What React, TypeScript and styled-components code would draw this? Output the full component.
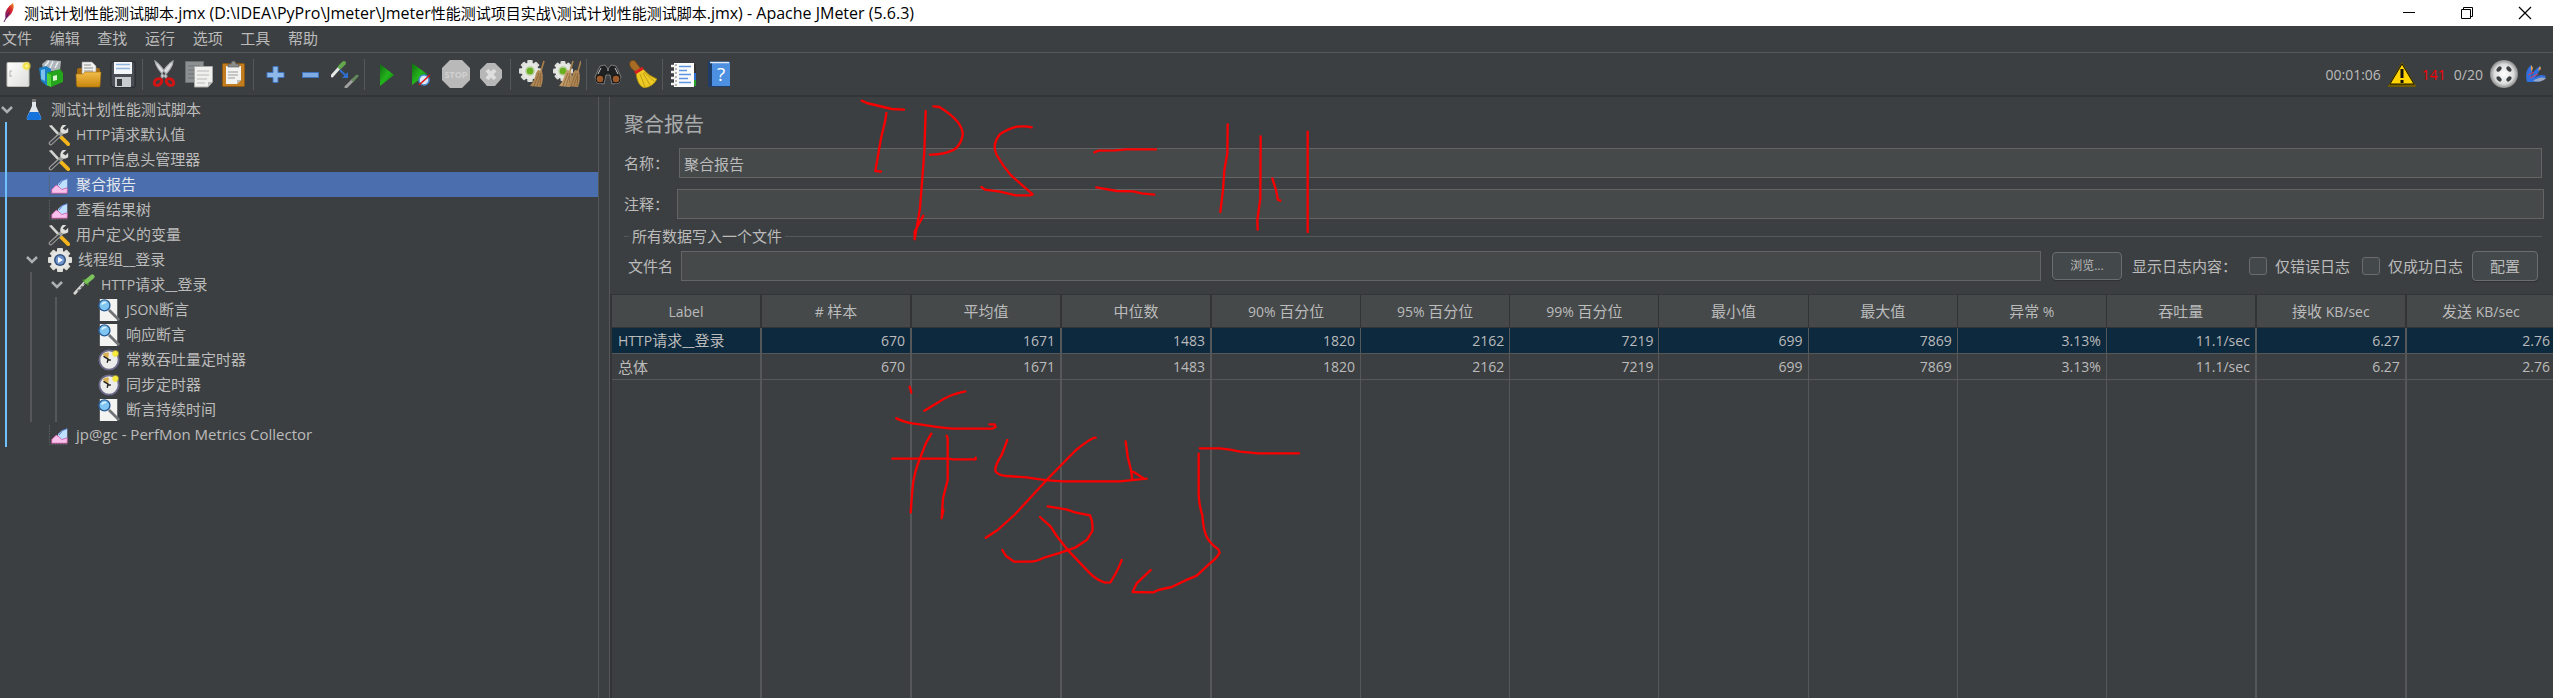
import React from "react";
import styled, { createGlobalStyle, css } from "styled-components";

const latinFont = `"Open Sans", "Noto Sans", "Noto Sans CJK SC", sans-serif`;

const color = {
  bg: "#3c3f41",
  field: "#45494a",
  text: "#bbbbbb",
  line: "#555759",
  fieldLine: "#646464",
  dark: "#323436",
  tree: "#4b6eaf",
  row: "#0d293e",
  active: "#6fc0ff",
};

const GlobalStyle = createGlobalStyle`
  *, *::before, *::after { box-sizing: border-box; }
  body {
    margin: 0;
    background: ${color.bg};
    color: ${color.text};
    font: 15px/25px ${latinFont};
  }
  button, input { font: inherit; color: inherit; }
`;

const Window = styled.div`
  position: relative;
  display: flex;
  flex-direction: column;
  height: 100vh;
  min-height: 460px;
  overflow: hidden;
`;

const Latin = styled.span<{ $size: number }>`
  font-size: ${(p) => p.$size}px;
`;

const Mixed = ({ text, size = 14 }: { text: string; size?: number }) => (
  <>
    {text.split(/([\x20-\x7e]+)/).map((part, i) =>
      i % 2 ? <Latin key={i} $size={size}>{part}</Latin> : part
    )}
  </>
);

/* ---------- title bar ---------- */

const TitleBar = styled.header`
  display: flex;
  align-items: center;
  height: 26px;
  flex: none;
  padding: 0 13px 0 2px;
  background: #fff;
  color: #000;
`;

const Title = styled.h1`
  flex: 1;
  margin: 0 0 0 8px;
  font-size: 15px;
  font-weight: 400;
  line-height: 24px;
  white-space: pre;
`;

const WindowButtons = styled.div`
  display: flex;
`;

const WindowButton = styled.button`
  display: grid;
  place-items: center;
  width: 58px;
  height: 22px;
  padding: 0;
  border: 0;
  background: none;
  &:last-child { width: 30px; margin-left: 14px; }
`;

/* ---------- menu ---------- */

const MenuBar = styled.nav`
  flex: none;
  height: 27px;
  border-bottom: 1px solid ${color.line};
`;

const MenuList = styled.div`
  display: flex;
  justify-content: space-between;
  width: 318px;
  padding-left: 2px;
`;

const MenuItem = styled.button`
  padding: 0;
  border: 0;
  background: none;
  line-height: 24px;
`;

/* ---------- tool bar ---------- */

const ToolBar = styled.div`
  display: flex;
  align-items: center;
  flex: none;
  height: 44px;
  border-bottom: 2px solid ${color.dark};
`;

const ToolButton = styled.button`
  display: grid;
  place-items: center;
  width: 35px;
  height: 32px;
  padding: 0;
  border: 0;
  background: none;
`;

const Divider = styled.i`
  width: 1px;
  height: 31px;
  margin: 0 3px 0 2px;
  background: ${color.line};
`;

const Status = styled.div`
  display: flex;
  align-items: center;
  gap: 7px;
  margin-left: auto;
  padding-right: 6px;
  font-size: 14px;
`;

const Errors = styled.span`
  color: #f80000;
  margin: 0 1px 0 -1px;
`;

/* ---------- body ---------- */

const Body = styled.div`
  display: flex;
  flex: 1;
  min-height: 0;
`;

const TreePane = styled.aside`
  flex: none;
  width: 599px;
  border-right: 1px solid ${color.line};
`;

const TreeList = styled.ul`
  list-style: none;
  margin: 0;
  padding: 0;
`;

const Branch = styled(TreeList)<{ $active?: boolean; $indent: number }>`
  background: linear-gradient(
      ${(p) => (p.$active ? color.active : color.line)},
      ${(p) => (p.$active ? color.active : color.line)}
    )
    ${(p) => p.$indent}px 0 / 2px 100% no-repeat;
`;

const TreeRow = styled.div<{ $depth: number; $selected?: boolean }>`
  display: flex;
  align-items: center;
  height: 25px;
  padding-left: ${(p) => p.$depth * 25}px;
  white-space: pre;
  ${(p) =>
    p.$selected &&
    css`
      color: #e4e8ee;
      background: linear-gradient(${color.active}, ${color.active}) 5px 0 / 2px 100% no-repeat, ${color.tree};
    `}
`;

const Toggle = styled.span`
  display: grid;
  width: 14px;
  margin-right: 9px;
`;

const TreeText = styled.span`
  margin-left: 6px;
`;

const Main = styled.main`
  display: flex;
  flex-direction: column;
  flex: 1;
  min-width: 0;
  margin-left: 10px;
  border-left: 1px solid ${color.line};
  overflow: hidden;
`;

const Heading = styled.h2`
  margin: 14px 0 10px 14px;
  font-size: 20px;
  font-weight: 400;
  line-height: 27px;
  color: #a9abac;
`;

const Field = styled.label<{ $wide?: boolean }>`
  display: flex;
  align-items: center;
  gap: ${(p) => (p.$wide ? 8 : 10)}px;
  height: 30px;
  margin: 0 ${(p) => (p.$wide ? 9 : 11)}px 11px 14px;
  white-space: nowrap;
`;

const TextBox = styled.input`
  flex: 1;
  min-width: 0;
  height: 30px;
  padding: 0 4px;
  border: 1px solid ${color.fieldLine};
  background: ${color.field};
  outline: 0;
`;

const FileGroup = styled.fieldset`
  min-width: 0;
  margin: -6px 11px 13px 14px;
  padding: 0 4px;
  border: 0;
  border-top: 1px solid ${color.line};
`;

const Legend = styled.legend`
  margin-left: 1px;
  padding: 0 3px;
  line-height: 25px;
`;

const FileRow = styled.div`
  display: flex;
  align-items: center;
  height: 30px;
  margin-top: 2px;
  white-space: nowrap;
`;

const FileName = styled.label`
  display: flex;
  align-items: center;
  flex: 1;
  gap: 8px;
`;

const PushButton = styled.button<{ $small?: boolean }>`
  width: ${(p) => (p.$small ? 70 : 66)}px;
  height: ${(p) => (p.$small ? 28 : 30)}px;
  margin-left: ${(p) => (p.$small ? 11 : 9)}px;
  padding: 0;
  border: 1px solid #6b6e70;
  border-radius: 4px;
  background: #43484a;
  box-shadow: 0 1px 1px #2f3133;
  font-size: ${(p) => (p.$small ? 12 : 15)}px;
  line-height: 20px;
`;

const LogCaption = styled.span`
  margin-left: 10px;
`;

const Check = styled.label`
  display: flex;
  align-items: center;
  gap: 8px;
  margin-left: 12px;
  input {
    appearance: none;
    width: 18px;
    height: 18px;
    margin: 0;
    border: 1px solid #6b6b6b;
    border-radius: 3px;
    background: #43494a;
  }
`;

const TableArea = styled.div`
  flex: 1;
  min-height: 0;
  border: 0 solid ${color.dark};
  border-width: 1px 0 0 2px;
`;

const Table = styled.table`
  width: calc(100% + 3px);
  height: 100%;
  table-layout: fixed;
  border-collapse: separate;
  border-spacing: 0;
`;

const Head = styled.th<{ $thick?: boolean }>`
  width: ${(p) => (p.$thick ? "150px" : "auto")};
  height: 33px;
  padding: 0;
  border: 0 solid ${color.dark};
  border-width: 0 ${(p) => (p.$thick ? 2 : 1)}px 1px 0;
  background: #45494a;
  font-weight: 400;
`;

const Cell = styled.td<{ $thick?: boolean; $selected?: boolean; $text?: boolean }>`
  height: 25px;
  padding: 0 5px 0 6px;
  border: 0 solid ${color.line};
  border-width: 0 ${(p) => (p.$thick ? 2 : 1)}px 1px 0;
  background: ${(p) => (p.$selected ? color.row : "transparent")};
  line-height: 24px;
  text-align: ${(p) => (p.$text ? "left" : "right")};
  white-space: nowrap;
`;

const EmptyCell = styled.td<{ $thick?: boolean }>`
  padding: 0;
  border-right: ${(p) => (p.$thick ? 2 : 1)}px solid ${color.line};
`;

const Ink = styled.svg`
  position: absolute;
  left: 0;
  top: 0;
  pointer-events: none;
`;

/* ---------- icons ---------- */

const Glyph = ({ size = 28, box = size, children }: { size?: number; box?: number; children: React.ReactNode }) => (
  <svg width={size} height={size} viewBox={`0 0 ${box} ${box}`} aria-hidden="true">
    {children}
  </svg>
);

const HiddenDefs = styled.svg`
  position: absolute;
`;

const Defs = () => (
  <HiddenDefs width="0" height="0" aria-hidden="true">
    <defs>
      <linearGradient id="paper" x1="0" y1="0" x2="1" y2="1">
        <stop offset="0" stopColor="#ffffff" />
        <stop offset="1" stopColor="#dcdcda" />
      </linearGradient>
      <linearGradient id="gold" x1="0" y1="0" x2="0" y2="1">
        <stop offset="0" stopColor="#f2bd4a" />
        <stop offset="1" stopColor="#c8860c" />
      </linearGradient>
      <linearGradient id="green" x1="0" y1="0" x2="1" y2="1">
        <stop offset="0" stopColor="#0f6a10" />
        <stop offset=".5" stopColor="#23b41c" />
        <stop offset="1" stopColor="#0b7a0c" />
      </linearGradient>
      <linearGradient id="feather" x1="1" y1="0" x2="0" y2="1">
        <stop offset="0" stopColor="#f69923" />
        <stop offset=".4" stopColor="#d2202f" />
        <stop offset="1" stopColor="#6d1f7c" />
      </linearGradient>
      <radialGradient id="glow">
        <stop offset="0" stopColor="#ffffb0" />
        <stop offset=".5" stopColor="#f2e03c" />
        <stop offset="1" stopColor="#f2e03c" stopOpacity="0" />
      </radialGradient>
      <radialGradient id="disc">
        <stop offset="0" stopColor="#ffffff" />
        <stop offset=".7" stopColor="#dcdcdc" />
        <stop offset="1" stopColor="#8c8c8c" />
      </radialGradient>
    </defs>
  </HiddenDefs>
);

const Cog = ({ cx, cy, r, children }: { cx: number; cy: number; r: number; children?: React.ReactNode }) => (
  <g transform={`translate(${cx} ${cy})`}>
    {[0, 45, 90, 135].map((a) => (
      <rect key={a} x={-r * 0.25} y={-r} width={r * 0.5} height={r * 2} rx="1" fill="#dededb" transform={`rotate(${a})`} />
    ))}
    <circle r={r * 0.78} fill="#e6e6e3" />
    {children}
  </g>
);

const Bristles = ({ x, light }: { x: number; light?: boolean }) => (
  <g transform={`translate(${x} 0)`}>
    <path d="M25 1 L22 11" stroke="#a8804c" strokeWidth="1.6" fill="none" />
    <path d="M19 10 L23 11 Q25 19 22 27 L11 26 Q16 20 17 13Z" fill={light ? "#c39b68" : "#b08855"} />
    <path d="M20 13 L15 26 M22 13 L18 26 M22 16 L21 26" stroke="#7c5a30" strokeWidth=".7" fill="none" />
  </g>
);

const NewIcon = () => (
  <Glyph>
    <rect x="3" y="2.5" width="22" height="24" rx="1" fill="url(#paper)" stroke="#bdbdb8" />
    <path d="M6 11 h2 M6 16 h2 M6 11 v6" stroke="#b5b5b5" fill="none" />
    <circle cx="22.5" cy="6" r="5" fill="url(#glow)" />
  </Glyph>
);
const TemplatesIcon = () => (
  <Glyph>
    <path d="M3 4 L8 0 L22 1 L21 10 L5 12Z" fill="#aeb5ba" />
    <path d="M6 6 L10 1 M11 8 L14 1 M16 8 L19 2" stroke="#e8ecee" strokeWidth="1.5" />
    <path d="M0 8 L7 6 L12 9 L12 25 L8 26 L2 21Z" fill="#1c7fc4" />
    <path d="M2 10 L6 9 V21 L2 19Z" fill="#7cc0ee" />
    <path d="M8 13 L21 9 L24 13 V22 L12 27 L8 25Z" fill="#25a51c" />
    <path d="M8 13 L12 15 V27 L8 25Z" fill="#4fd13a" />
    <path d="M14 16 L18 15 V20 L14 21Z" fill="#d8f5cd" />
  </Glyph>
);
const OpenIcon = () => (
  <Glyph>
    <path d="M3 10 Q3 8 5 8 H24 Q26 8 26 10 V20 H3Z" fill="#a46a10" />
    <path d="M8 2 H18 L22 6 V16 H8Z" fill="#f1f1ef" stroke="#999" strokeWidth=".6" />
    <path d="M10 5 h7 M10 8 h9 M10 11 h9" stroke="#8e8e8e" />
    <path d="M2 14 H9 L11 12 H27 L26 26 Q26 27 25 27 H4 Q2.5 27 2.5 25Z" fill="url(#gold)" stroke="#a56d0a" strokeWidth=".6" />
  </Glyph>
);
const SaveIcon = () => (
  <Glyph>
    <path d="M2 3 Q2 2 3 2 H25 Q26 2 26 3 V26 Q26 27 25 27 H4 L2 25Z" fill="#4a4f56" stroke="#25282c" />
    <rect x="5" y="2" width="18" height="12" fill="#f4f7fa" />
    <path d="M7 4.5 h14 M7 8.5 h14" stroke="#8fb4dd" strokeWidth="1.5" />
    <rect x="6" y="17" width="16" height="10" fill="#c9ccce" />
    <rect x="8" y="19" width="5" height="7" fill="#3a3d40" />
  </Glyph>
);
const CutIcon = () => (
  <Glyph>
    <path d="M5 1 Q6 8 16 18 L17 16 Q12 6 5 1Z M23 1 Q23 8 12 18 L11 16 Q15 6 23 1Z" fill="#dcdedf" stroke="#a8abad" strokeWidth="1.2" />
    <ellipse cx="8" cy="22" rx="4" ry="3" transform="rotate(-35 8 22)" fill="none" stroke="#d01414" strokeWidth="3" />
    <ellipse cx="20" cy="22" rx="4" ry="3" transform="rotate(35 20 22)" fill="none" stroke="#d01414" strokeWidth="3" />
  </Glyph>
);
const CopyIcon = () => (
  <Glyph>
    <rect x=".5" y="1.5" width="18" height="21" fill="#8d9090" stroke="#6b6e6e" />
    <path d="M3 6 h12 M3 10 h6 M3 14 h6 M3 18 h6" stroke="#6d7070" />
    <path d="M9.5 6.5 H27.5 V22 L23 27 H9.5Z" fill="#f0f0ee" stroke="#aaa" />
    <path d="M12 11 h12 M12 15 h12 M12 19 h10 M12 23 h8" stroke="#b9b9b7" />
    <path d="M27 22 H23 V27Z" fill="#bdbdbb" />
  </Glyph>
);
const PasteIcon = () => (
  <Glyph>
    <rect x="2.5" y="3.5" width="22" height="23" rx="1" fill="#c17d1f" stroke="#8b5712" />
    <path d="M6 6 H21 V20 L17 24 H6Z" fill="#f2f2f0" />
    <path d="M8 12 h10 M8 15 h10 M8 18 h7" stroke="#9b9b9b" />
    <path d="M21 20 H17 V24Z" fill="#bbb" />
    <path d="M8 7 V4 H11 Q11 1 13.5 1 Q16 1 16 4 H19 V7Z" fill="#8a8c8a" stroke="#555" strokeWidth=".6" />
  </Glyph>
);
const PlusIcon = () => (
  <Glyph>
    <path d="M12 6.5 h5 v6 h6 v5 h-6 v5 h-5 v-5 h-6 v-5 h6Z" fill="#8fb8ea" stroke="#3f74bd" />
  </Glyph>
);
const MinusIcon = () => (
  <Glyph>
    <rect x="6.5" y="12.5" width="16" height="5" fill="#7fabe2" stroke="#3f74bd" />
  </Glyph>
);
const ToggleIcon = () => (
  <Glyph>
    <path d="M1 16 L9 7" stroke="#e6e8e6" strokeWidth="3" strokeLinecap="round" />
    <path d="M9 7 L13 3" stroke="#63a84a" strokeWidth="4" strokeLinecap="round" />
    <path d="M9 10 L15 16" stroke="#2f6fd0" strokeWidth="2" />
    <path d="M17 12 V18 H11Z" fill="#2f6fd0" />
    <g opacity=".7">
      <path d="M15 27 L22 20" stroke="#c9cbc9" strokeWidth="3" strokeLinecap="round" />
      <path d="M22 20 L26 16" stroke="#74a866" strokeWidth="3" strokeLinecap="round" />
    </g>
  </Glyph>
);
const PlayIcon = () => (
  <Glyph>
    <path d="M8 4 L22 15 L8 26Z" fill="url(#green)" />
  </Glyph>
);
const PlayNowIcon = () => (
  <Glyph>
    <path d="M5 3 L20 14 L5 25Z" fill="url(#green)" />
    <circle cx="17" cy="20" r="5" fill="#dbe9f7" stroke="#4a8ad0" strokeWidth="1.5" />
    <path d="M12 25 L23 15" stroke="#d11" strokeWidth="1.5" />
  </Glyph>
);
const StopIcon = () => (
  <Glyph>
    <path d="M8 0 H20 L28 8 V20 L20 28 H8 L0 20 V8Z" fill="#b9b9b9" />
    <text x="14" y="18" textAnchor="middle" fontSize="9" fontWeight="700" fill="#d0d0d0">STOP</text>
  </Glyph>
);
const ShutdownIcon = () => (
  <Glyph>
    <path d="M10 3 H18 L25 10 V18 L18 26 H10 L3 18 V10Z" fill="#b7b7b7" />
    <path d="M10 10 L18 19 M18 10 L10 19" stroke="#dedede" strokeWidth="4" />
  </Glyph>
);
const ClearIcon = () => (
  <Glyph>
    <Cog cx={12} cy={11} r={11}>
      <circle r="4" fill="#69b022" stroke="#b7cf97" strokeWidth="1.5" />
    </Cog>
    <Bristles x={1} />
  </Glyph>
);
const ClearAllIcon = () => (
  <Glyph>
    <Cog cx={10} cy={11} r={10}>
      <circle r="4" fill="#69b022" stroke="#b7cf97" strokeWidth="1.5" />
    </Cog>
    <Bristles x={-5} light />
    <Bristles x={3} />
  </Glyph>
);
const SearchIcon = () => (
  <Glyph>
    <path d="M6 6 L11 5 L14 9 L17 5 L22 6 L27 17 L25 23 L18 24 L16 15 H12 L10 24 L3 23 L1 17Z" fill="#1f2022" stroke="#8b8b8b" strokeWidth=".8" />
    <circle cx="6" cy="19" r="4" fill="#9a5a2c" stroke="#111" />
    <circle cx="22" cy="19" r="4" fill="#9a5a2c" stroke="#111" />
    <path d="M7 8 L4 14 M21 8 L24 14 M13 10 h2" stroke="#c9c9c9" />
  </Glyph>
);
const BroomIcon = () => (
  <Glyph>
    <path d="M1 2 Q3 -1 6 1 L12 9 L7 12 Q-1 7 1 2Z" fill="#a86d24" stroke="#6d4212" strokeWidth=".7" />
    <path d="M7 13 L14 9 Q20 16 28 19 Q24 27 15 28 Q8 25 7 13Z" fill="#ecc924" stroke="#a68505" strokeWidth=".7" />
    <path d="M11 14 L16 27 M14 13 L21 25 M15 12 L25 21" stroke="#b39210" strokeWidth=".8" />
    <path d="M6 13 L14 8" stroke="#d81f1f" strokeWidth="3" />
  </Glyph>
);
const LogIcon = () => (
  <Glyph>
    <path d="M24 4 h2 v22 h-4Z" fill="#24a02c" />
    <path d="M24 4 h2 v9 h-2Z" fill="#333" />
    <path d="M24 13 h2 v7 h-2Z" fill="#2d6bcf" />
    <rect x="4" y="3" width="20" height="24" fill="#fbfbfb" />
    <path d="M1 6 h5 M1 12 h5 M1 18 h5 M1 24 h5" stroke="#f0f0f0" strokeWidth="2.5" />
    <path d="M6 4 V26" stroke="#777" strokeDasharray="2 2" />
    <path d="M9 6.5 h12 M9 10.5 h8 M9 14.5 h12 M9 18.5 h9 M9 22.5 h12" stroke="#5d95e0" strokeWidth="1.3" />
  </Glyph>
);
const HelpIcon = () => (
  <Glyph>
    <rect x="3" y="1" width="22" height="26" rx="1" fill="#1e3d68" />
    <rect x="7" y="2" width="18" height="24" fill="#4d8fe0" />
    <path d="M5 2.5 H24" stroke="#dfe8f2" strokeWidth="1.5" />
    <text x="16" y="21" textAnchor="middle" fontSize="19" fill="#fff">?</text>
  </Glyph>
);
const WarningIcon = () => (
  <Glyph>
    <path d="M14 2 L28 26 V27 H0 V26Z" fill="#6d5a00" />
    <path d="M14 4 L26 24 H2Z" fill="#ffd400" stroke="#1a1800" />
    <path d="M14 9 V18 M14 20 V23" stroke="#111" strokeWidth="3" />
  </Glyph>
);
const ThreadsIcon = () => (
  <Glyph>
    <circle cx="14" cy="14" r="14" fill="url(#disc)" />
    {[45, 135, 225, 315].map((a) => (
      <ellipse key={a} cx="14" cy="7" rx="3" ry="2" fill="#3d4042" transform={`rotate(${a} 14 14)`} />
    ))}
  </Glyph>
);
const BirdIcon = () => (
  <Glyph size={22}>
    <path d="M2 19 Q-1 8 6 2 Q9 4 6 15 Q9 6 15 3 Q17 5 10 15 Q14 10 21 13 Q19 19 8 19Z" fill="#2f6fe0" />
    <path d="M6 2 L8 5 L6 9Z M15 3 L16 6 L13 8Z" fill="#f6a43a" />
    <path d="M3 12 L9 9 M5 15 L13 11" stroke="#e0405a" />
    <path d="M8 18 Q14 13 21 15 Q18 20 8 18Z" fill="#9aa7c4" />
  </Glyph>
);
const AppIcon = () => (
  <svg width="14" height="22" viewBox="0 0 14 22" aria-hidden="true">
    <path d="M11 1 Q13 6 9 12 L4 17 Q2 12 5 7 Q8 3 11 1Z" fill="url(#feather)" />
    <path d="M7 10 L2 20" stroke="#5a1a5e" strokeWidth="1" />
  </svg>
);

const FlaskIcon = () => (
  <Glyph size={22}>
    <path d="M9 1 h4 v6 l5 11 q1 3 -2 3 h-10 q-3 0 -2 -3 l5 -11Z" fill="#dfe6ec" />
    <path d="M6.5 13 h9 l2.5 5 q1 3 -2 3 h-10 q-3 0 -2 -3Z" fill="#1474dc" />
    <path d="M9 0 h4 v3 h-4Z" fill="#777" />
  </Glyph>
);
const ToolsIcon = () => (
  <Glyph size={22} box={24}>
    <path d="M1 2 L4 1 L14 12 L12 14Z" fill="#d5d5d3" />
    <path d="M14 14 L22 22" stroke="#f4b51b" strokeWidth="4" strokeLinecap="round" />
    <path d="M3 21 L17 8" stroke="#9a9c9a" strokeWidth="4.500" strokeLinecap="round" />
    <path d="M3 21 L12 13" stroke="#3d4042" strokeWidth="2" strokeLinecap="round" />
    <path d="M16 1 Q12 5 14 9 Q18 12 22 9 V4 L19 7 L16 5 L20 1Z" fill="#dededc" />
  </Glyph>
);
const ChartIcon = () => (
  <Glyph size={22} box={24}>
    <path d="M1.5 1 V22.500 H22" stroke="#5c6062" fill="none" strokeDasharray="2 1" />
    <path d="M11 18 V11 L15 7 L21 5 V19Z" fill="#bfe0ff" />
    <path d="M12 12 L16 7 L21 5" stroke="#3f6dc8" fill="none" />
    <path d="M4 21 V17 L9 12 L12 14 L15 17 L21 15 V21Z" fill="#f8c0ea" stroke="#c24b9c" strokeWidth=".8" />
  </Glyph>
);
const ThreadGroupIcon = () => (
  <Glyph size={24}>
    <Cog cx={12} cy={12} r={12}>
      <circle r="6" fill="#34517e" />
      <circle r="4.5" fill="#6d94cc" />
      <path d="M-2 -3 L3 0 L-2 3Z" fill="#fff" />
    </Cog>
  </Glyph>
);
const PipetteIcon = () => (
  <Glyph size={22} box={24}>
    <path d="M2 21 L13 9" stroke="#d3d6d3" strokeWidth="3" strokeLinecap="round" />
    <path d="M5 19 L13 10" stroke="#4b4e4c" strokeWidth="1.2" strokeDasharray="3 2" />
    <path d="M11 6 L17 12" stroke="#3c8a28" strokeWidth="2.5" />
    <path d="M15 8 L21 3" stroke="#7cc35c" strokeWidth="5" strokeLinecap="round" />
  </Glyph>
);
const AssertionIcon = () => (
  <Glyph size={22} box={24}>
    <rect x="2" y="0" width="19" height="24" fill="#f3f3f2" />
    <path d="M12 12 L23 23" stroke="#6f7375" strokeWidth="3" />
    <circle cx="7" cy="7" r="6" fill="#7fc6f2" stroke="#2a5c94" strokeWidth="1.5" />
    <path d="M4 6 Q6 3 9 4" stroke="#e2f4ff" strokeWidth="1.5" fill="none" />
  </Glyph>
);
const TimerIcon = () => (
  <Glyph size={22} box={24}>
    <circle cx="12" cy="12" r="10.5" fill="#ececea" stroke="#6d6b8c" strokeWidth="2" />
    <path d="M11 12 L5 6 Q8 3 12 4Z" fill="#d9b154" />
    <path d="M6 8 L11 11 L10 15 M11 12 h3" stroke="#222" strokeWidth="1.5" fill="none" />
    <circle cx="19" cy="5" r="4.5" fill="url(#glow)" />
    <circle cx="19" cy="5" r="2.5" fill="#f6ec3a" />
  </Glyph>
);

/* ---------- data ---------- */

type Node = {
  label: string;
  icon: React.ComponentType;
  selected?: boolean;
  children?: Node[];
};

const plan: Node = {
  label: "测试计划性能测试脚本",
  icon: FlaskIcon,
  children: [
    { label: "HTTP请求默认值", icon: ToolsIcon },
    { label: "HTTP信息头管理器", icon: ToolsIcon },
    { label: "聚合报告", icon: ChartIcon, selected: true },
    { label: "查看结果树", icon: ChartIcon },
    { label: "用户定义的变量", icon: ToolsIcon },
    {
      label: "线程组__登录",
      icon: ThreadGroupIcon,
      children: [
        {
          label: "HTTP请求__登录",
          icon: PipetteIcon,
          children: [
            { label: "JSON断言", icon: AssertionIcon },
            { label: "响应断言", icon: AssertionIcon },
            { label: "常数吞吐量定时器", icon: TimerIcon },
            { label: "同步定时器", icon: TimerIcon },
            { label: "断言持续时间", icon: AssertionIcon },
          ],
        },
      ],
    },
    { label: "jp@gc - PerfMon Metrics Collector", icon: ChartIcon },
  ],
};

const menus = ["文件", "编辑", "查找", "运行", "选项", "工具", "帮助"];

const tools: [string, React.ComponentType][][] = [
  [["新建", NewIcon], ["模板", TemplatesIcon], ["打开", OpenIcon], ["保存", SaveIcon]],
  [["剪切", CutIcon], ["复制", CopyIcon], ["粘贴", PasteIcon]],
  [["展开", PlusIcon], ["折叠", MinusIcon], ["切换", ToggleIcon]],
  [["启动", PlayIcon], ["不停顿开始", PlayNowIcon], ["停止", StopIcon], ["关闭", ShutdownIcon]],
  [["清除", ClearIcon], ["清除全部", ClearAllIcon]],
  [["查找", SearchIcon], ["重置搜索", BroomIcon]],
  [["函数助手", LogIcon], ["帮助", HelpIcon]],
];

const columns: { name: string; thick?: boolean }[] = [
  { name: "Label", thick: true },
  { name: "# 样本", thick: true },
  { name: "平均值", thick: true },
  { name: "中位数", thick: true },
  { name: "90% 百分位" },
  { name: "95% 百分位" },
  { name: "99% 百分位" },
  { name: "最小值" },
  { name: "最大值" },
  { name: "异常 %" },
  { name: "吞吐量", thick: true },
  { name: "接收 KB/sec", thick: true },
  { name: "发送 KB/sec" },
];

const figures = ["670", "1671", "1483", "1820", "2162", "7219", "699", "7869", "3.13%", "11.1/sec", "6.27", "2.76"];
const rows = [
  ["HTTP请求__登录", ...figures],
  ["总体", ...figures],
];

const TreeItem = ({ node, depth }: { node: Node; depth: number }) => {
  const Icon = node.icon;
  const latinOnly = /^[\x20-\x7e]+$/.test(node.label);
  return (
    <li>
      <TreeRow $depth={depth} $selected={node.selected}>
        <Toggle>
          {node.children && (
            <svg width="14" height="12" viewBox="0 0 14 12" aria-hidden="true">
              <path d="M2 3 L7 8 L12 3" fill="none" stroke="#adb0b2" strokeWidth="2.5" />
            </svg>
          )}
        </Toggle>
        <Icon />
        <TreeText>
          <Mixed text={node.label} size={latinOnly ? 15 : 14} />
        </TreeText>
      </TreeRow>
      {node.children && (
        <Branch $active={depth === 0} $indent={5 + depth * 25}>
          {node.children.map((child) => (
            <TreeItem key={child.label} node={child} depth={depth + 1} />
          ))}
        </Branch>
      )}
    </li>
  );
};

const Handwriting = () => (
  <Ink width="1400" height="640" viewBox="0 0 1400 640" aria-hidden="true">
    <g fill="none" stroke="#f80000" strokeWidth="7" strokeLinecap="round" strokeLinejoin="round">
      <g transform="translate(590 95) scale(.33333)">
        <path d="M815 17 L830 24 L905 42 L942 44 M889 54 L886 76 L873 130 L856 228 L873 230" />
        <path d="M1007 48 L1003 170 L990 340 L974 433 V410 L1000 362 M1030 34 L1048 36 Q1120 80 1118 120 Q1113 150 1092 164 Q1060 180 1020 179" />
        <path d="M1325 97 Q1310 92 1280 95 Q1245 105 1228 120 Q1205 150 1220 180 Q1240 215 1262 240 L1328 298 L1320 301 H1278 L1230 290 L1185 284 L1174 276" />
      </g>
      <g transform="translate(1020 90) scale(.33333)">
        <path d="M223 187 L235 182 L285 181 L320 178 H408 M229 292 L290 303 L340 304 L365 310 L403 314" />
        <path d="M623 103 L622 190 L613 240 L609 300 L601 366" />
        <path d="M722 139 L721 325 L712 390 L713 419 M757 265 L768 300 L774 330 L781 332 M863 125 V426" />
      </g>
      <g transform="translate(860 380) scale(.33333)">
        <path d="M149 20 L154 38 M193 92 L235 67 Q270 42 316 34" />
        <path d="M109 115 Q140 130 180 133 Q240 143 280 146 H397 L407 141 L404 133 H388" />
        <path d="M97 236 H265 L280 238 H347 V233 M214 161 Q195 190 186 220 Q160 280 157 330 L152 398" />
        <path d="M260 167 L263 175 V300 L249 355 L245 415 L250 390" />
        <path d="M442 180 L425 225 Q402 260 407 275 Q415 286 440 288 L500 292 Q560 302 610 304 H780 L860 296 M797 184 L803 230 L813 270 L817 300 M820 275 L850 295" />
        <path d="M707 173 Q690 175 645 213 L560 300 L465 403 L413 450 L377 473" />
        <path d="M563 379 L618 388 L645 397 L690 406 Q700 425 697 453 L681 479 L645 503 Q600 520 555 532 Q530 545 510 545 H463 L438 528 L427 510" />
        <path d="M540 411 L572 440 L590 468 L625 512 L690 580 Q710 600 735 608 L751 607 Q775 570 785 540" />
        <path d="M1019 205 H1080 Q1110 208 1140 215 L1195 220 H1317" />
        <path d="M1016 221 V345 Q1018 380 1027 405 Q1030 450 1040 470 Q1050 490 1075 508 L1079 518 Q1070 535 1050 550 L1010 587 L975 602 L935 621 L895 630 L880 637 L818 636 L830 610 L872 570" />
      </g>
    </g>
  </Ink>
);

export default function App() {
  return (
    <Window>
      <GlobalStyle />
      <Defs />
      <TitleBar>
        <AppIcon />
        <Title>
          <Mixed
            size={16}
            text="测试计划性能测试脚本.jmx (D:\IDEA\PyPro\Jmeter\Jmeter性能测试项目实战\测试计划性能测试脚本.jmx) - Apache JMeter (5.6.3)"
          />
        </Title>
        <WindowButtons>
          <WindowButton aria-label="最小化">
            <svg width="14" height="14"><path d="M1 6.5 H13" stroke="#000" /></svg>
          </WindowButton>
          <WindowButton aria-label="还原">
            <svg width="14" height="14" fill="none" stroke="#000"><path d="M1.5 3.5 h9 v9 h-9Z M3.5 3.5 v-2 h9 v9 h-2" /></svg>
          </WindowButton>
          <WindowButton aria-label="关闭窗口">
            <svg width="14" height="14"><path d="M1 1 L13 13 M13 1 L1 13" stroke="#000" strokeWidth="1.2" /></svg>
          </WindowButton>
        </WindowButtons>
      </TitleBar>

      <MenuBar>
        <MenuList>
          {menus.map((m) => (
            <MenuItem key={m}>{m}</MenuItem>
          ))}
        </MenuList>
      </MenuBar>

      <ToolBar>
        {tools.map((group, i) => (
          <React.Fragment key={i}>
            {i > 0 && <Divider />}
            {group.map(([name, Icon]) => (
              <ToolButton key={name} aria-label={name}>
                <Icon />
              </ToolButton>
            ))}
          </React.Fragment>
        ))}
        <Status>
          <span>00:01:06</span>
          <WarningIcon />
          <Errors>141</Errors>
          <span>0/20</span>
          <ThreadsIcon />
          <BirdIcon />
        </Status>
      </ToolBar>

      <Body>
        <TreePane>
          <TreeList>
            <TreeItem node={plan} depth={0} />
          </TreeList>
        </TreePane>

        <Main>
          <Heading>聚合报告</Heading>
          <Field>
            名称：
            <TextBox defaultValue="聚合报告" />
          </Field>
          <Field $wide>
            注释：
            <TextBox />
          </Field>
          <FileGroup>
            <Legend>所有数据写入一个文件</Legend>
            <FileRow>
              <FileName>
                文件名
                <TextBox />
              </FileName>
              <PushButton $small>浏览...</PushButton>
              <LogCaption>显示日志内容：</LogCaption>
              <Check>
                <input type="checkbox" />
                仅错误日志
              </Check>
              <Check>
                <input type="checkbox" />
                仅成功日志
              </Check>
              <PushButton>配置</PushButton>
            </FileRow>
          </FileGroup>

          <TableArea>
            <Table>
              <thead>
                <tr>
                  {columns.map((c) => (
                    <Head key={c.name} $thick={c.thick}>
                      <Mixed text={c.name} />
                    </Head>
                  ))}
                </tr>
              </thead>
              <tbody>
                {rows.map((row, r) => (
                  <tr key={row[0]}>
                    {row.map((value, i) => (
                      <Cell key={i} $thick={columns[i].thick} $selected={r === 0} $text={i === 0}>
                        <Mixed text={value} />
                      </Cell>
                    ))}
                  </tr>
                ))}
                <tr aria-hidden="true">
                  {columns.map((c) => (
                    <EmptyCell key={c.name} $thick={c.thick} />
                  ))}
                </tr>
              </tbody>
            </Table>
          </TableArea>
        </Main>
      </Body>
      <Handwriting />
    </Window>
  );
}
